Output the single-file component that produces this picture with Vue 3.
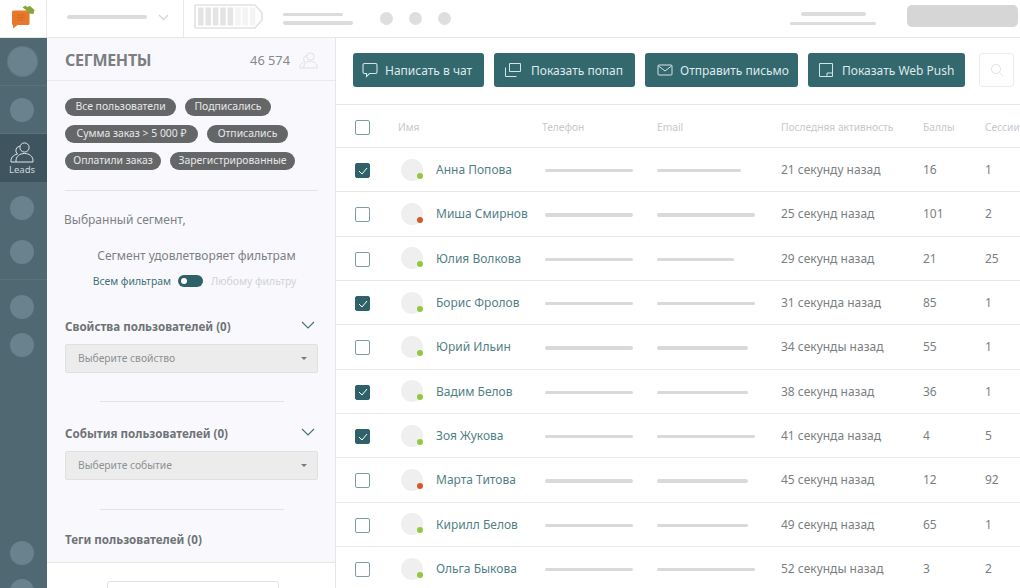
<template>
  <div class="page">
    <!-- верхняя панель -->
    <header class="topbar">
      <div class="logo-cell">
        <svg width="24" height="28" viewBox="0 -4 24 28">
          <path d="M2.5 1.5 H17 Q18.5 1.5 18.5 3 V14.5 Q18.5 16 17 16 H6.5 L2 19.5 V16 Q1 16 1 14.5 V3 Q1 1.5 2.5 1.5 Z" fill="#e8792c" />
          <path d="M6 6h8M6 8.5h8M6 11h6" stroke="#cf6a22" stroke-width="1" />
          <path d="M11.5 -1.5 L14.5 -3.5 L16 -2 L19 -3 L23.5 1 L22.5 5 L18 4.5 L15 1 Z" fill="#84a63a" />
        </svg>
      </div>
      <div class="project-cell">
        <span class="ph project-bar"></span>
        <svg class="project-chev" width="11" height="7" viewBox="0 0 11 7"><path d="M1 1l4.5 4.5L10 1" fill="none" stroke="#d4d4d4" stroke-width="1.3" /></svg>
      </div>
      <svg class="battery" width="70" height="25" viewBox="0 0 70 25">
        <path d="M2 1 H61 L68 9 V16 L61 24 H2 Q1 24 1 23 V2 Q1 1 2 1 Z" fill="none" stroke="#e2e2e2" stroke-width="1.6" />
        <rect v-for="n in 8" :key="n" :x="4 + (n - 1) * 7.4" y="3.5" width="5.6" height="18" :fill="n > 5 ? '#f4f4f4' : '#e4e4e4'" />
      </svg>
      <div class="ph-stack">
        <span class="ph" style="width: 60px"></span>
        <span class="ph" style="width: 70px"></span>
      </div>
      <div class="dots">
        <span></span><span></span><span></span>
      </div>
      <div class="ph-stack right">
        <span class="ph" style="width: 65px"></span>
        <span class="ph" style="width: 86px"></span>
      </div>
      <div class="account"></div>
    </header>

    <div class="body">
      <!-- левое меню -->
      <nav class="rail">
        <div class="rail-item first"><span class="rail-dot big"></span></div>
        <div class="rail-item"><span class="rail-dot"></span></div>
        <div class="rail-item active">
          <svg width="24" height="21" viewBox="0 0 24 21" fill="none" stroke="#dfe6e8" stroke-width="1">
            <circle cx="14.5" cy="5.5" r="4.6" />
            <path d="M6 20 C5.5 14 10 11.5 14.5 11.5 C19 11.5 23.5 14 23 20 Z" stroke-linejoin="round" />
            <path d="M9.8 4.2 A4.4 4.4 0 0 0 7.5 12 C3 13 0.5 16 1 20 H6" />
          </svg>
          <span>Leads</span>
        </div>
        <div class="rail-group">
          <span class="rail-dot"></span>
          <span class="rail-dot"></span>
        </div>
        <div class="rail-group second">
          <span class="rail-dot"></span>
          <span class="rail-dot"></span>
        </div>
        <div class="rail-group bottom">
          <span class="rail-dot"></span>
          <span class="rail-dot"></span>
        </div>
      </nav>

      <!-- сегменты -->
      <aside class="segments">
        <div class="seg-head">
          <h2>СЕГМЕНТЫ</h2>
          <span class="seg-count">46 574</span>
          <svg width="19" height="17" viewBox="0 0 24 21" fill="none" stroke="#d9dcdf" stroke-width="1.1">
            <circle cx="14.5" cy="5.5" r="4.6" />
            <path d="M6 20 C5.5 14 10 11.5 14.5 11.5 C19 11.5 23.5 14 23 20 Z" stroke-linejoin="round" />
            <path d="M9.8 4.2 A4.4 4.4 0 0 0 7.5 12 C3 13 0.5 16 1 20 H6" />
          </svg>
        </div>
        <div class="seg-scroll">
          <div class="tags">
            <div v-for="(line, i) in tagLines" :key="i" class="tag-line">
              <span v-for="t in line" :key="t.text" class="tag" :style="{ width: t.w + 'px' }">{{ t.text }}</span>
            </div>
          </div>
          <div class="sep"></div>
          <p class="chosen">Выбранный сегмент,</p>
          <p class="match">Сегмент удовлетворяет фильтрам</p>
          <div class="switch-row">
            <span class="on">Всем фильтрам</span>
            <span class="switch"><i></i></span>
            <span class="off">Любому фильтру</span>
          </div>

          <div class="filter-title">
            <span>Свойства пользователей (0)</span>
            <svg width="14" height="9" viewBox="0 0 14 9"><path d="M1 1l6 6 6-6" fill="none" stroke="#3f7278" stroke-width="1.1" /></svg>
          </div>
          <div class="select">Выберите свойство<i></i></div>
          <div class="short-sep"></div>

          <div class="filter-title">
            <span>События пользователей (0)</span>
            <svg width="14" height="9" viewBox="0 0 14 9"><path d="M1 1l6 6 6-6" fill="none" stroke="#3f7278" stroke-width="1.1" /></svg>
          </div>
          <div class="select">Выберите событие<i></i></div>
          <div class="short-sep low"></div>

          <div class="filter-title tags-title"><span>Теги пользователей (0)</span></div>
        </div>
        <div class="seg-foot"><div class="foot-btn"></div></div>
      </aside>

      <!-- таблица -->
      <main class="main">
        <div class="actions">
          <button class="act">
            <svg width="16" height="16" viewBox="0 0 16 16" fill="none" stroke="#d5e3e5" stroke-width="1.1"><path d="M2.5 1.5h11a1.5 1.5 0 0 1 1.5 1.5v7a1.5 1.5 0 0 1-1.5 1.5H7.5l-3 3v-3h-2A1.5 1.5 0 0 1 1 10V3a1.5 1.5 0 0 1 1.5-1.5z" /></svg>
            Написать в чат
          </button>
          <button class="act">
            <svg width="18" height="16" viewBox="0 0 18 16" fill="none" stroke="#d5e3e5" stroke-width="1"><path d="M5.5 1.5h11v8h-11zM1.5 5.5v9h11" /></svg>
            Показать попап
          </button>
          <button class="act">
            <svg width="16" height="14" viewBox="0 0 16 14" fill="none" stroke="#d5e3e5" stroke-width="1"><rect x="1" y="2" width="14" height="10" rx="1" /><path d="M1.5 3l6.5 5 6.5-5" /></svg>
            Отправить письмо
          </button>
          <button class="act">
            <svg width="16" height="16" viewBox="0 0 16 16" fill="none" stroke="#d5e3e5" stroke-width="1"><path d="M1.5 1.5h13v13h-13zM9 14.5v-3.5h5.5" /></svg>
            Показать Web Push
          </button>
          <div class="search">
            <svg width="14" height="14" viewBox="0 0 14 14" fill="none" stroke="#e2e2e2" stroke-width="1"><circle cx="6" cy="6" r="4.5" /><path d="M9.5 9.5l3.5 3.5" /></svg>
          </div>
        </div>

        <div class="row head">
          <span class="check"></span>
          <span class="h-name">Имя</span>
          <span></span>
          <span class="h-phone">Телефон</span>
          <span>Email</span>
          <span>Последняя активность</span>
          <span>Баллы</span>
          <span>Сессии</span>
        </div>
        <div v-for="u in users" :key="u.name" class="row">
          <span class="check" :class="{ checked: u.checked }">
            <svg v-if="u.checked" width="10" height="8" viewBox="0 0 10 8"><path d="M1 4l3 3 5-6" fill="none" stroke="#fff" stroke-width="1" /></svg>
          </span>
          <span class="avatar"><i :class="u.online ? 'green' : 'red'"></i></span>
          <span class="name">{{ u.name }}</span>
          <span class="bar" style="width: 88px"></span>
          <span class="bar" :style="{ width: u.email + 'px' }"></span>
          <span class="txt">{{ u.last }}</span>
          <span class="txt">{{ u.score }}</span>
          <span class="txt">{{ u.sessions }}</span>
        </div>
      </main>
    </div>
  </div>
</template>

<script setup>
const tagLines = [
  [{ text: 'Все пользователи', w: 111 }, { text: 'Подписались', w: 86 }],
  [{ text: 'Сумма заказ > 5 000 ₽', w: 133 }, { text: 'Отписались', w: 81 }],
  [{ text: 'Оплатили заказ', w: 96 }, { text: 'Зарегистрированные', w: 125 }],
]

const users = [
  { name: 'Анна Попова', checked: true, online: true, email: 84, last: '21 секунду назад', score: 16, sessions: 1 },
  { name: 'Миша Смирнов', checked: false, online: false, email: 98, last: '25 секунд назад', score: 101, sessions: 2 },
  { name: 'Юлия Волкова', checked: false, online: true, email: 77, last: '29 секунд назад', score: 21, sessions: 25 },
  { name: 'Борис Фролов', checked: true, online: true, email: 98, last: '31 секунда назад', score: 85, sessions: 1 },
  { name: 'Юрий Ильин', checked: false, online: true, email: 91, last: '34 секунды назад', score: 55, sessions: 1 },
  { name: 'Вадим Белов', checked: true, online: true, email: 91, last: '38 секунд назад', score: 36, sessions: 1 },
  { name: 'Зоя Жукова', checked: true, online: true, email: 98, last: '41 секунда назад', score: 4, sessions: 5 },
  { name: 'Марта Титова', checked: false, online: false, email: 91, last: '45 секунд назад', score: 12, sessions: 92 },
  { name: 'Кирилл Белов', checked: false, online: true, email: 91, last: '49 секунд назад', score: 65, sessions: 1 },
  { name: 'Ольга Быкова', checked: false, online: true, email: 98, last: '52 секунды назад', score: 3, sessions: 2 },
]
</script>

<style>
html, body { margin: 0; overflow: hidden; background: #fff; }
</style>

<style scoped>
.page {
  width: 1020px;
  height: 588px;
  overflow: hidden;
  font-family: "Noto Sans", "Open Sans", sans-serif;
  color: #6f7477;
  display: flex;
  flex-direction: column;
}

/* верхняя панель */
.topbar {
  height: 38px;
  flex-shrink: 0;
  display: flex;
  align-items: center;
  box-sizing: border-box;
  border-bottom: 1px solid #e6e6e6;
}
.topbar > * { flex-shrink: 0; }
.logo-cell {
  width: 47px;
  height: 37px;
  box-sizing: border-box;
  border-right: 1px solid #e8e8e8;
  display: flex;
  align-items: center;
  justify-content: center;
}
.project-cell {
  width: 137px;
  height: 37px;
  box-sizing: border-box;
  border-right: 1px solid #e8e8e8;
  padding: 0 0 3px 20px;
  display: flex;
  align-items: center;
}
.project-bar { width: 80px; }
.project-chev { margin-left: 11px; }
.ph {
  display: block;
  height: 3.5px;
  border-radius: 2px;
  background: #dcdcdc;
}
.battery {
  margin-left: 10px;
  align-self: flex-start;
  margin-top: 4px;
}
.ph-stack {
  margin-left: 19px;
  display: flex;
  flex-direction: column;
  gap: 5px;
}
.ph-stack.right {
  margin-left: 339px;
  gap: 6px;
  align-items: center;
}
.dots { margin-left: 27px; display: flex; gap: 16px; }
.dots span {
  width: 13px;
  height: 13px;
  border-radius: 50%;
  background: #dedede;
}
.account {
  width: 111px;
  height: 22px;
  margin: 0 0 5px 31px;
  border-radius: 5px;
  background: #d6d6d6;
}

.body { flex: 1; display: flex; min-height: 0; }

/* левое меню */
.rail {
  width: 47px;
  flex-shrink: 0;
  box-sizing: border-box;
  background: #506872;
  display: flex;
  flex-direction: column;
}
.rail-item {
  height: 48px;
  display: flex;
  align-items: center;
  justify-content: center;
  box-sizing: border-box;
  padding-right: 3px;
  border-bottom: 1px solid #5b727c;
}
.rail-dot {
  display: block;
  width: 24px;
  height: 24px;
  border-radius: 50%;
  background: #6a828d;
}
.rail-dot.big {
  width: 29px;
  height: 29px;
  box-shadow: 0 0 0 1px #62797f;
}
.rail-item.active {
  flex-direction: column;
  gap: 0;
  padding-top: 3px;
  background: #3e5560;
  border-bottom: none;
  font-size: 9.5px;
  line-height: 14px;
  color: #cfd8db;
}
.rail-group {
  display: flex;
  flex-direction: column;
  align-items: center;
  gap: 20px;
  padding: 14px 3px 15px 0;
  border-bottom: 1px solid #5b727c;
}
.rail-group.second { padding-top: 15px; gap: 14px; border-bottom: none; }
.rail-group.bottom { margin-top: auto; gap: 14px; padding: 0 3px 0 0; margin-bottom: -16px; }

/* сегменты */
.segments {
  width: 289px;
  flex-shrink: 0;
  box-sizing: border-box;
  border-right: 1px solid #e6e6e6;
  background: #f9f9fd;
  display: flex;
  flex-direction: column;
}
.seg-head {
  height: 43px;
  flex-shrink: 0;
  box-sizing: border-box;
  border-bottom: 1px solid #e8e8ee;
  display: flex;
  align-items: center;
  padding: 2px 17px 0 18px;
}
.seg-head h2 {
  margin: 0;
  flex: 1;
  font-size: 16px;
  font-weight: 700;
  letter-spacing: -0.3px;
  color: #7b7f83;
}
.seg-count { font-size: 12.8px; color: #85898c; margin-right: 9px; }
.seg-scroll {
  flex: 1;
  min-height: 0;
  padding: 17px 17px 0 18px;
}
.tags { display: flex; flex-direction: column; gap: 9px; }
.tag-line { display: flex; gap: 9px; }
.tag {
  height: 18px;
  line-height: 17px;
  text-align: center;
  border-radius: 9px;
  background: #646668;
  color: #e8e8e8;
  font-size: 10.4px;
  white-space: nowrap;
}
.sep {
  height: 1px;
  margin-top: 20px;
  background: #e2e2e8;
}
.chosen {
  margin: 20px 0 0 -1px;
  font-size: 12px;
  line-height: 18px;
  color: #7d8184;
}
.match {
  margin: 18px 0 0;
  text-align: center;
  padding-left: 10px;
  font-size: 12px;
  line-height: 18px;
  color: #7d8184;
}
.switch-row {
  margin-top: 9px;
  display: flex;
  align-items: center;
  justify-content: center;
  padding-left: 6px;
  font-size: 10.4px;
  white-space: nowrap;
}
.on { color: #3d7078; }
.off { color: #d0d3d6; }
.switch {
  width: 25px;
  height: 12px;
  margin: 0 8px 0 7px;
  border-radius: 6px;
  background: #2f6169;
  display: flex;
  align-items: center;
  padding-left: 3px;
  box-sizing: border-box;
}
.switch i { width: 6px; height: 6px; border-radius: 50%; background: #fff; }
.filter-title {
  margin-top: 30px;
  display: flex;
  align-items: center;
  justify-content: space-between;
  padding-right: 3px;
  font-size: 11.6px;
  font-weight: 700;
  line-height: 18px;
  color: #6f7376;
}
.filter-title svg { margin-top: -4px; }
.select {
  position: relative;
  height: 29px;
  margin-top: 8px;
  box-sizing: border-box;
  padding-left: 12px;
  line-height: 27px;
  border: 1px solid #e0e0e0;
  border-radius: 2px;
  background: #ececec;
  font-size: 10.3px;
  color: #8d9093;
}
.select i {
  position: absolute;
  right: 10px;
  top: 12px;
  border: 3px solid transparent;
  border-top: 3px solid #77797b;
  border-bottom: none;
}
.short-sep {
  height: 1px;
  width: 184px;
  margin: 28px auto 0;
  background: #e2e2e8;
}
.short-sep.low { margin-top: 29px; }
.short-sep + .filter-title { margin-top: 23px; }
.short-sep + .tags-title { margin-top: 21px; }
.seg-foot {
  height: 26px;
  flex-shrink: 0;
  box-sizing: border-box;
  background: #fff;
  border-top: 1px solid #e6e6ea;
  padding: 18px 0 0 60px;
}
.foot-btn {
  width: 172px;
  height: 30px;
  box-sizing: border-box;
  border: 1px solid #e2e2e2;
  border-radius: 3px;
}

/* таблица */
.main { flex: 1; min-width: 0; }
.actions {
  height: 67px;
  box-sizing: border-box;
  border-bottom: 1px solid #e8e8e8;
  padding: 15px 0 0 17px;
  display: flex;
  align-items: flex-start;
  gap: 10px;
}
.act {
  height: 34px;
  padding: 0 0 0 9px;
  border: none;
  border-radius: 3px;
  background: #33686f;
  color: #dfe9ea;
  font: inherit;
  font-size: 12px;
  display: flex;
  align-items: center;
  gap: 7px;
  white-space: nowrap;
}
.act:nth-child(1) { width: 131px; }
.act:nth-child(2) { width: 141px; gap: 9px; padding-left: 10px; }
.act:nth-child(3) { width: 153px; padding-left: 12px; }
.act:nth-child(4) { width: 157px; padding-left: 10px; gap: 8px; }
.search {
  width: 35px;
  height: 34px;
  margin-left: 4px;
  box-sizing: border-box;
  border: 1px solid #ececec;
  border-radius: 3px;
  display: flex;
  align-items: center;
  justify-content: center;
}
.row {
  display: grid;
  grid-template-columns: 46px 35px 109px 112px 124px 142px 62px 1fr;
  align-items: center;
  height: 44.33px;
  box-sizing: border-box;
  padding: 2px 0 0 19px;
  border-bottom: 1px solid #e8e8e8;
  font-size: 12px;
  white-space: nowrap;
}
.row.head {
  height: 43px;
  font-size: 10.2px;
  color: #c6c9cb;
}
.h-name { margin-left: -3px; }
.h-phone { margin-left: -3px; }
.check {
  width: 15px;
  height: 15px;
  box-sizing: border-box;
  border: 1.4px solid #7c9da1;
  border-radius: 2px;
  display: flex;
  align-items: center;
  justify-content: center;
}
.check.checked { background: #2f6169; border-color: #2f6169; }
.avatar {
  position: relative;
  width: 22px;
  height: 22px;
  margin-top: -2px;
  border-radius: 50%;
  background: #efefef;
}
.avatar i {
  position: absolute;
  right: 0;
  bottom: 2px;
  width: 6px;
  height: 6px;
  border-radius: 50%;
}
.avatar .green { background: #93c83e; }
.avatar .red { background: #d8562a; }
.name { color: #527f86; margin-top: -2px; }
.bar {
  display: block;
  height: 3.5px;
  border-radius: 2px;
  background: #d9d9d9;
}
.txt { color: #7b7f82; margin-top: -2px; }
</style>
